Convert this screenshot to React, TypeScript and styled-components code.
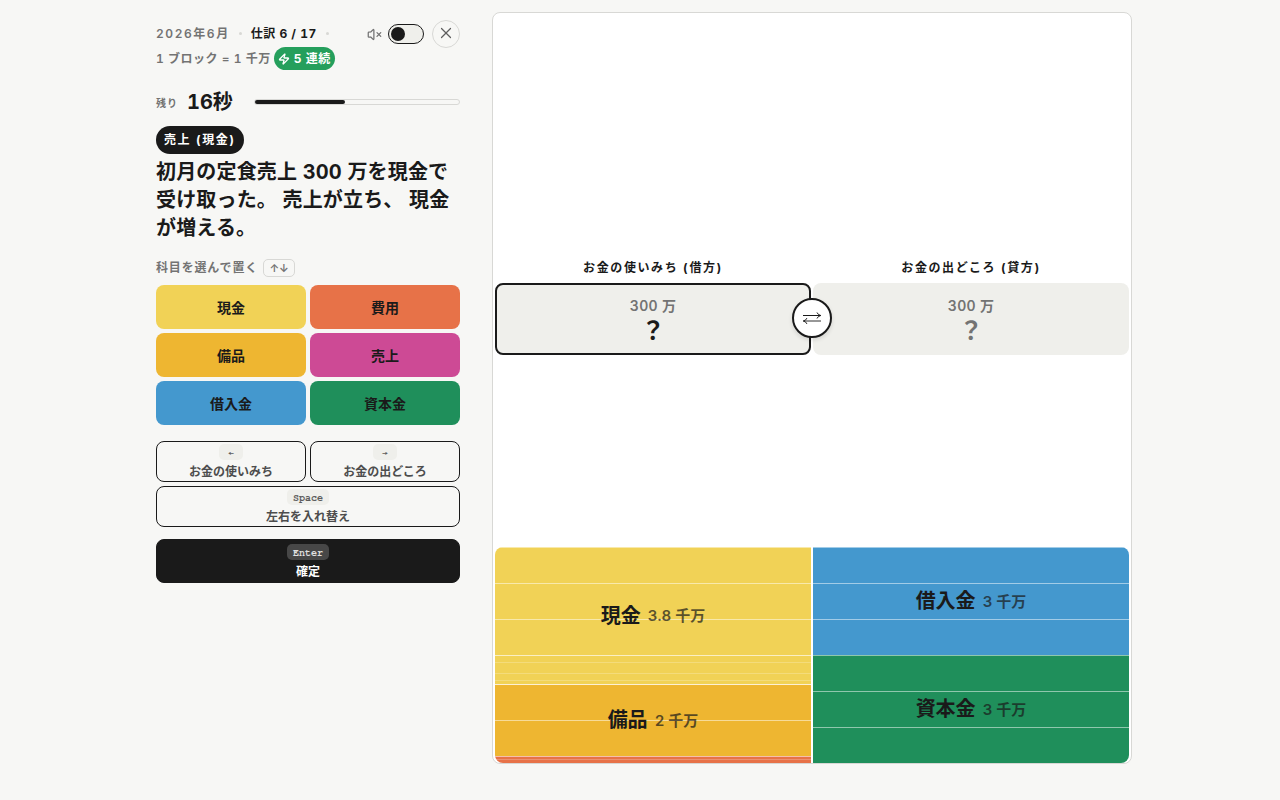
import { VolumeX, X, Zap } from "lucide-react";
import styled, { createGlobalStyle } from "styled-components";

const GlobalStyle = createGlobalStyle`
  :root {
    --color-bg: #f7f7f5;
    --color-surface: #ffffff;
    --color-sunken: #efefeb;
    --color-ink: #1a1a1a;
    --color-text: #4d4d4d;
    --color-muted: #737373;
    --color-line: #d8d8d5;
    --color-streak: #259f5c;
    --radius-md: 8px;
    --radius-full: 999px;
  }

  * {
    box-sizing: border-box;
    margin: 0;
    padding: 0;
  }

  body {
    background-color: var(--color-bg);
    color: var(--color-ink);
    font-family: Inter, "Noto Sans CJK JP", sans-serif;
    font-variant-numeric: tabular-nums;
    overflow: hidden;
  }

  button {
    font-family: inherit;
    cursor: pointer;
  }
`;

const StyledGame = styled.main`
  width: 984px;
  height: 800px;
  margin: 0 auto;
  padding: 12px 0 0 8px;
  display: grid;
  grid-template-columns: 304px 640px;
  gap: 32px;
  align-items: start;
`;

const Panel = styled.section`
  display: flex;
  flex-direction: column;
  padding-top: 8px;
`;

const Header = styled.header`
  display: flex;
  align-items: flex-start;
  justify-content: space-between;
  height: 52px;
`;

const Meta = styled.div`
  padding-top: 1px;
  width: 200px;
  font-size: 12px;
  font-weight: 600;
  line-height: 25px;
  color: var(--color-muted);
  white-space: nowrap;
`;

const MetaRow = styled.div`
  display: flex;
  align-items: center;
  height: 25px;
`;

const Month = styled.span`
  letter-spacing: 0.13em;
`;

const Dot = styled.span`
  width: 3px;
  height: 3px;
  margin: 0 9px;
  border-radius: var(--radius-full);
  background-color: var(--color-line);
`;

const Progress = styled.strong`
  font-weight: 700;
  color: var(--color-ink);
  letter-spacing: 0.04em;
`;

const Scale = styled.span`
  letter-spacing: 0.042em;
`;

const Streak = styled.span`
  display: flex;
  align-items: center;
  gap: 4px;
  height: 23px;
  margin-left: 3px;
  padding: 0 4px;
  border-radius: var(--radius-full);
  background-color: var(--color-streak);
  color: #fff;
  font-weight: 700;
  letter-spacing: 0.04em;
`;

const Controls = styled.div`
  display: flex;
  align-items: center;
  color: var(--color-muted);
`;

const Toggle = styled.button`
  width: 36px;
  height: 20px;
  margin: 0 8px 0 6px;
  padding: 2px;
  border: 1px solid var(--color-ink);
  border-radius: var(--radius-full);
  background-color: var(--color-sunken);

  &::before {
    content: "";
    display: block;
    width: 14px;
    height: 14px;
    border-radius: var(--radius-full);
    background-color: var(--color-ink);
  }
`;

const CloseButton = styled.button`
  display: grid;
  place-items: center;
  width: 28px;
  height: 28px;
  padding-bottom: 2px;
  border: 1px solid var(--color-line);
  border-radius: var(--radius-full);
  background-color: transparent;
  color: #5e5e5e;
`;

const Timer = styled.div`
  display: flex;
  align-items: center;
  height: 28px;
  margin-top: 16px;

  & small {
    width: 31px;
    font-size: 10px;
    font-weight: 600;
    letter-spacing: 0.1em;
    color: var(--color-muted);
  }

  & strong {
    width: 67px;
    padding-bottom: 3px;
    font-size: 20px;
    font-weight: 700;
  }
`;

const TimerTrack = styled.div`
  flex: 1;
  height: 6px;
  border: 1px solid var(--color-line);
  border-radius: var(--radius-full);
`;

const TimerFill = styled.div`
  height: 4px;
  border-radius: var(--radius-full);
  background-color: var(--color-ink);
`;

const Category = styled.span`
  align-self: flex-start;
  height: 28px;
  margin-top: 10px;
  padding: 0 8px;
  border-radius: 14px;
  background-color: var(--color-ink);
  color: #fff;
  font-size: 12px;
  font-weight: 700;
  line-height: 28px;
  letter-spacing: 0.13em;
`;

const Question = styled.h1`
  margin-top: 4px;
  font-size: 20px;
  font-weight: 700;
  line-height: 28px;
  letter-spacing: 0.16px;
`;

const Hint = styled.p`
  display: flex;
  align-items: center;
  gap: 5px;
  height: 18px;
  margin-top: 17px;
  font-size: 12px;
  font-weight: 600;
  line-height: 18px;
  letter-spacing: 0.07em;
  color: var(--color-muted);
`;

const ArrowKeys = styled.kbd`
  width: 32px;
  height: 18px;
  border: 1px solid var(--color-line);
  border-radius: 5px;
  font-family: inherit;
  font-size: 11px;
  line-height: 16px;
  letter-spacing: 0;
  text-align: center;
`;

const ButtonGrid = styled.div`
  display: grid;
  grid-template-columns: 1fr 1fr;
  gap: 4px;
  margin-top: 8px;
`;

const AccountButton = styled.button<{ $color: string }>`
  height: 44px;
  border: none;
  border-radius: var(--radius-md);
  background-color: ${(props) => props.$color};
  color: var(--color-ink);
  font-size: 14px;
  font-weight: 700;
`;

const Actions = styled(ButtonGrid)`
  margin-top: 16px;
`;

const ActionButton = styled.button<{ $wide?: boolean }>`
  display: flex;
  flex-direction: column;
  align-items: center;
  gap: 3px;
  height: 41px;
  padding-top: 2px;
  grid-column: ${(props) => (props.$wide ? "span 2" : "auto")};
  border: 1px solid var(--color-ink);
  border-radius: var(--radius-md);
  background-color: transparent;
  color: var(--color-text);
  font-size: 12px;
  font-weight: 700;
  line-height: 18px;
`;

const ConfirmButton = styled(ActionButton)`
  height: 44px;
  margin-top: 12px;
  padding-top: 4px;
  background-color: var(--color-ink);
  color: #fff;
`;

const Key = styled.kbd<{ $dark?: boolean }>`
  height: 16px;
  padding: 1px 6px 0;
  min-width: 24px;
  border-radius: 5px;
  background-color: ${(props) =>
    props.$dark ? "#474747" : "var(--color-sunken)"};
  color: ${(props) => (props.$dark ? "#e0e0e0" : "#5c5c5c")};
  font-family: "Courier 10 Pitch", "Nimbus Mono PS", FreeMono, "Courier Prime",
    monospace;
  font-size: 10px;
  font-weight: 700;
  line-height: 16px;
`;

const Board = styled.section`
  display: flex;
  flex-direction: column;
  justify-content: space-between;
  height: 752px;
  padding: 246px 2px 0;
  border: 1px solid var(--color-line);
  border-radius: var(--radius-md);
  background-color: var(--color-surface);
`;

const Entry = styled.div`
  position: relative;
  display: grid;
  grid-template-columns: 1fr 1fr;
  gap: 2px;
`;

const SideTitle = styled.h2`
  height: 22px;
  font-size: 12px;
  font-weight: 700;
  line-height: 18px;
  letter-spacing: 0.133em;
  text-align: center;
`;

const Slot = styled.div<{ $active?: boolean }>`
  display: flex;
  flex-direction: column;
  align-items: center;
  height: 72px;
  padding-top: 11px;
  border: 2px solid
    ${(props) => (props.$active ? "var(--color-ink)" : "transparent")};
  border-radius: var(--radius-md);
  background-color: var(--color-sunken);
  color: ${(props) =>
    props.$active ? "var(--color-ink)" : "var(--color-muted)"};

  & span {
    font-size: 14px;
    font-weight: 600;
    line-height: 20px;
    letter-spacing: 0.02em;
    color: var(--color-muted);
  }

  & strong {
    font-size: 24px;
    font-weight: 700;
    line-height: 30px;
  }
`;

const SwapButton = styled.button`
  position: absolute;
  left: 50%;
  bottom: 17px;
  display: grid;
  place-items: center;
  width: 40px;
  height: 40px;
  transform: translateX(-50%);
  border: 2px solid var(--color-ink);
  border-radius: var(--radius-full);
  background-color: var(--color-surface);
  box-shadow: 0 2px 4px rgb(0 0 0 / 12%);
  color: var(--color-ink);
`;

const Ledger = styled.div`
  display: grid;
  grid-template-columns: 1fr 1fr;
  gap: 2px;
  border-radius: var(--radius-md);
  overflow: hidden;
`;

const Account = styled.div<{ $color: string }>`
  display: grid;
  background-color: ${(props) => props.$color};

  & > * {
    grid-area: 1 / 1;
  }
`;

const Unit = styled.div<{ $size: number; $line: number }>`
  height: ${(props) => props.$size}px;
  border-top: 1px solid rgb(255 255 255 / ${(props) => props.$line}%);
`;

const AccountLabel = styled.div`
  display: flex;
  align-items: center;
  justify-content: center;
  gap: 7px;
  padding-bottom: 3px;
  font-size: 20px;
  font-weight: 700;

  & span {
    padding-top: 1px;
    font-size: 15px;
    font-weight: 600;
    opacity: 0.7;
  }
`;

const colors = {
  cash: "#f1d256",
  expense: "#e77248",
  equipment: "#eeb631",
  sales: "#cd4a95",
  loan: "#4498ce",
  capital: "#1f8f5b",
};

const accounts = [
  { name: "現金", color: colors.cash },
  { name: "費用", color: colors.expense },
  { name: "備品", color: colors.equipment },
  { name: "売上", color: colors.sales },
  { name: "借入金", color: colors.loan },
  { name: "資本金", color: colors.capital },
];

// units: [height, line opacity in %]
const debit = [
  {
    name: "現金",
    amount: "3.8 千万",
    color: colors.cash,
    units: [[36, 50], [36, 50], [36, 50], [7, 65], [11, 22], [7, 22], [4, 22]],
  },
  {
    name: "備品",
    amount: "2 千万",
    color: colors.equipment,
    units: [[36, 80], [36, 50]],
  },
  { name: "", amount: "", color: colors.expense, units: [[3, 55], [4, 22]] },
];

const credit = [
  {
    name: "借入金",
    amount: "3 千万",
    color: colors.loan,
    units: [[36, 50], [36, 50], [36, 50]],
  },
  {
    name: "資本金",
    amount: "3 千万",
    color: colors.capital,
    units: [[36, 50], [36, 50], [36, 50]],
  },
];

function SwapIcon() {
  return (
    <svg width="20" height="14" viewBox="0 0 20 14" fill="none">
      <path
        d="M1 4.5H18.5M15 1.5Q16 4 18.8 4.5Q16 5 15 7.5"
        stroke="currentColor"
      />
      <path
        d="M19 10H1.5M5 7Q4 9.5 1.2 10Q4 10.5 5 13"
        stroke="currentColor"
        strokeWidth="0.9"
      />
    </svg>
  );
}

function Stack({ items }: { items: typeof debit }) {
  return (
    <div>
      {items.map((item) => (
        <Account key={item.color} $color={item.color}>
          <div>
            {item.units.map(([size, line], i) => (
              <Unit key={i} $size={size} $line={line} />
            ))}
          </div>
          {item.name && (
            <AccountLabel>
              {item.name}
              <span>{item.amount}</span>
            </AccountLabel>
          )}
        </Account>
      ))}
    </div>
  );
}

export default function App() {
  const timeLeft = 44;

  return (
    <>
      <GlobalStyle />
      <StyledGame>
        <Panel>
          <Header>
            <Meta>
              <MetaRow>
                <Month>2026年6月</Month>
                <Dot />
                <Progress>仕訳 6 / 17</Progress>
                <Dot />
              </MetaRow>
              <MetaRow>
                <Scale>1 ブロック = 1 千万</Scale>
                <Streak>
                  <Zap size={12} strokeWidth={2.6} />5 連続
                </Streak>
              </MetaRow>
            </Meta>
            <Controls>
              <VolumeX size={15} />
              <Toggle aria-label="サウンド" />
              <CloseButton aria-label="閉じる">
                <X size={18} strokeWidth={1.6} />
              </CloseButton>
            </Controls>
          </Header>

          <Timer>
            <small>残り</small>
            <strong>16秒</strong>
            <TimerTrack>
              <TimerFill style={{ width: `${timeLeft}%` }} />
            </TimerTrack>
          </Timer>

          <Category>売上 (現金)</Category>
          <Question>
            初月の定食売上 300 万を現金で受け取った。 売上が立ち、 現金が増える。
          </Question>

          <Hint>
            科目を選んで置く
            <ArrowKeys>↑↓</ArrowKeys>
          </Hint>
          <ButtonGrid>
            {accounts.map((account) => (
              <AccountButton key={account.name} $color={account.color}>
                {account.name}
              </AccountButton>
            ))}
          </ButtonGrid>

          <Actions>
            <ActionButton>
              <Key>←</Key>
              お金の使いみち
            </ActionButton>
            <ActionButton>
              <Key>→</Key>
              お金の出どころ
            </ActionButton>
            <ActionButton $wide>
              <Key>Space</Key>
              左右を入れ替え
            </ActionButton>
          </Actions>
          <ConfirmButton>
            <Key $dark>Enter</Key>
            確定
          </ConfirmButton>
        </Panel>

        <Board>
          <Entry>
            <SideTitle>お金の使いみち (借方)</SideTitle>
            <SideTitle>お金の出どころ (貸方)</SideTitle>
            <Slot $active>
              <span>300 万</span>
              <strong>？</strong>
            </Slot>
            <Slot>
              <span>300 万</span>
              <strong>？</strong>
            </Slot>
            <SwapButton aria-label="左右を入れ替え">
              <SwapIcon />
            </SwapButton>
          </Entry>
          <Ledger>
            <Stack items={debit} />
            <Stack items={credit} />
          </Ledger>
        </Board>
      </StyledGame>
    </>
  );
}
